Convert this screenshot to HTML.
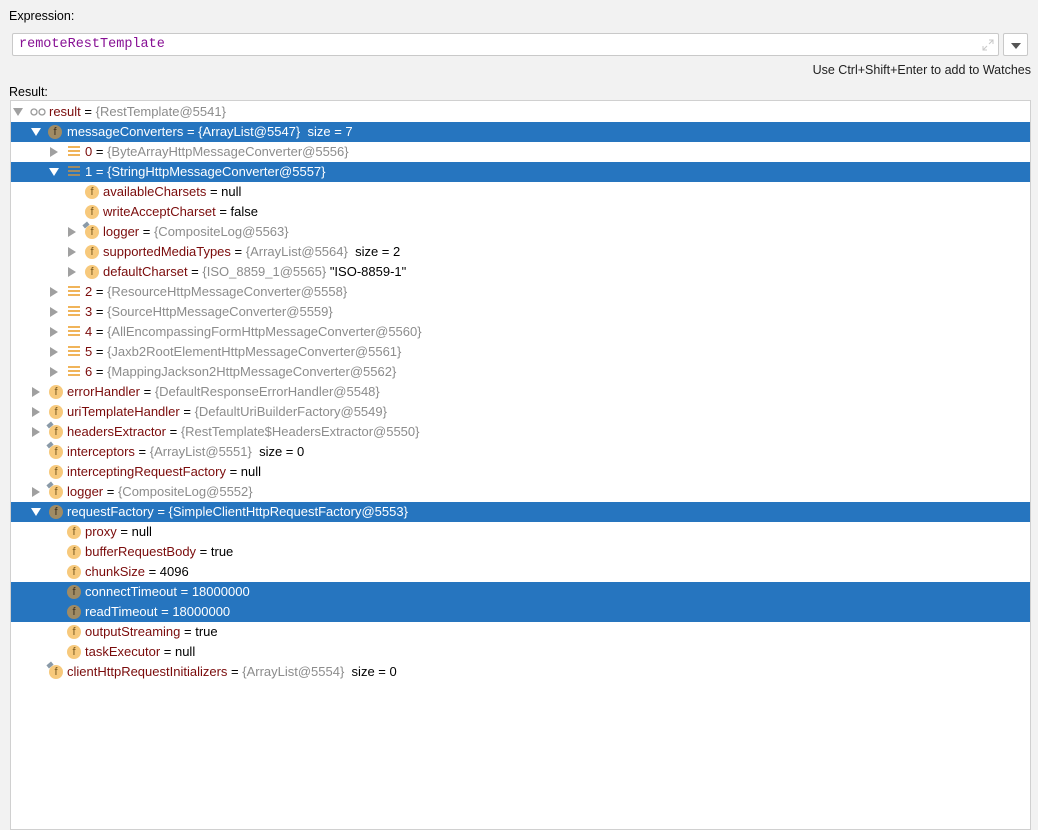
<!DOCTYPE html>
<html><head><style>
body{margin:0;width:1038px;height:816px;background:#f2f2f2;font-family:"Liberation Sans",sans-serif;font-size:13px;position:relative;overflow:hidden;color:#000}
.lbl{position:absolute;color:#000;font-size:12.5px}
.inp{position:absolute;left:12px;top:33px;width:987px;height:23px;background:#fff;border:1px solid #c9c9c9;border-radius:2px;box-sizing:border-box}
.inp span{position:absolute;left:6px;top:3px;font-family:"Liberation Mono",monospace;font-size:13.5px;color:#871094}
.dd{position:absolute;left:1003px;top:33px;width:25px;height:23px;background:#fff;border:1px solid #c9c9c9;border-radius:2px;box-sizing:border-box}
.tree{position:absolute;left:10px;top:100px;width:1021px;height:730px;background:#fff;border:1px solid #d0d0d0;box-sizing:border-box}
.row{position:absolute;left:11px;width:1019px;height:20px;line-height:20px;white-space:pre}
.sel{background:#2675bf;color:#fff}
.sel .n,.sel .g{color:#fff}
.n{color:#7a0b0b}
.g{color:#8c8c8c}
.t{position:absolute;top:0}
.ar{position:absolute;top:6px;width:0;height:0}
.ex{border-left:5px solid transparent;border-right:5px solid transparent;border-top:8px solid #a0a0a0;top:6px}
.co{border-top:5px solid transparent;border-bottom:5px solid transparent;border-left:8px solid #a0a0a0;top:5px}
.sel .ex{border-top-color:#fff}
.f{position:absolute;top:3px;width:14px;height:14px;border-radius:50%;background:#f7c97c;color:#7a5a20;font-size:11px;line-height:15px;text-align:center}
.sel .f{background:#a08b64;color:#3a3020}
.pin{position:absolute;top:1px;width:6px;height:4px;background:#8a9aa8;transform:rotate(-40deg)}
.li{position:absolute;top:4px;width:12px;height:12px;background:repeating-linear-gradient(#f0b45a 0 2px,transparent 2px 4px)}
.sel .li{background:repeating-linear-gradient(#a08b64 0 2px,transparent 2px 4px)}
</style></head><body>
<div class="lbl" style="left:9px;top:9px">Expression:</div>
<div class="inp"><span>remoteRestTemplate</span>
<svg style="position:absolute;left:968px;top:4px" width="14" height="14" viewBox="0 0 14 14"><path d="M8 2h4v4M12 2L8 6M6 12H2V8M2 12l4-4" stroke="#c8c8c8" fill="none"/></svg></div>
<div class="dd"><div style="position:absolute;left:7px;top:9px;border-left:5px solid transparent;border-right:5px solid transparent;border-top:6px solid #555"></div></div>
<div class="lbl" style="right:7px;top:63px;color:#222">Use Ctrl+Shift+Enter to add to Watches</div>
<div class="lbl" style="left:9px;top:85px">Result:</div>
<div class="tree"></div>

<div class="row" style="top:102px"><div class="ar ex" style="left:2px"></div><svg style="position:absolute;left:19px;top:6px" width="17" height="8"><circle cx="4" cy="4" r="3" stroke="#999" fill="none" stroke-width="1.3"/><circle cx="12" cy="4" r="3" stroke="#999" fill="none" stroke-width="1.3"/></svg><span class="t" style="left:38px"><span class="n">result</span> = <span class="g">{RestTemplate@5541}</span></span></div>

<div class="row sel" style="top:122px"><div class="ar ex" style="left:20px"></div><div class="f" style="left:37px">f</div><span class="t" style="left:56px"><span class="n">messageConverters</span> = <span class="g">{ArrayList@5547}</span>  size = 7</span></div>
<div class="row" style="top:142px"><div class="ar co" style="left:39px"></div><div class="li" style="left:57px"></div><span class="t" style="left:74px"><span class="n">0</span> = <span class="g">{ByteArrayHttpMessageConverter@5556}</span></span></div>
<div class="row sel" style="top:162px"><div class="ar ex" style="left:38px"></div><div class="li" style="left:57px"></div><span class="t" style="left:74px"><span class="n">1</span> = <span class="g">{StringHttpMessageConverter@5557}</span></span></div>
<div class="row" style="top:182px"><div class="f" style="left:74px">f</div><span class="t" style="left:92px"><span class="n">availableCharsets</span> = null</span></div>
<div class="row" style="top:202px"><div class="f" style="left:74px">f</div><span class="t" style="left:92px"><span class="n">writeAcceptCharset</span> = false</span></div>
<div class="row" style="top:222px"><div class="ar co" style="left:57px"></div><div class="f" style="left:74px">f</div><div class="pin" style="left:72px"></div><span class="t" style="left:92px"><span class="n">logger</span> = <span class="g">{CompositeLog@5563}</span></span></div>
<div class="row" style="top:242px"><div class="ar co" style="left:57px"></div><div class="f" style="left:74px">f</div><span class="t" style="left:92px"><span class="n">supportedMediaTypes</span> = <span class="g">{ArrayList@5564}</span>  size = 2</span></div>
<div class="row" style="top:262px"><div class="ar co" style="left:57px"></div><div class="f" style="left:74px">f</div><span class="t" style="left:92px"><span class="n">defaultCharset</span> = <span class="g">{ISO_8859_1@5565}</span> "ISO-8859-1"</span></div>
<div class="row" style="top:282px"><div class="ar co" style="left:39px"></div><div class="li" style="left:57px"></div><span class="t" style="left:74px"><span class="n">2</span> = <span class="g">{ResourceHttpMessageConverter@5558}</span></span></div>
<div class="row" style="top:302px"><div class="ar co" style="left:39px"></div><div class="li" style="left:57px"></div><span class="t" style="left:74px"><span class="n">3</span> = <span class="g">{SourceHttpMessageConverter@5559}</span></span></div>
<div class="row" style="top:322px"><div class="ar co" style="left:39px"></div><div class="li" style="left:57px"></div><span class="t" style="left:74px"><span class="n">4</span> = <span class="g">{AllEncompassingFormHttpMessageConverter@5560}</span></span></div>
<div class="row" style="top:342px"><div class="ar co" style="left:39px"></div><div class="li" style="left:57px"></div><span class="t" style="left:74px"><span class="n">5</span> = <span class="g">{Jaxb2RootElementHttpMessageConverter@5561}</span></span></div>
<div class="row" style="top:362px"><div class="ar co" style="left:39px"></div><div class="li" style="left:57px"></div><span class="t" style="left:74px"><span class="n">6</span> = <span class="g">{MappingJackson2HttpMessageConverter@5562}</span></span></div>
<div class="row" style="top:382px"><div class="ar co" style="left:21px"></div><div class="f" style="left:38px">f</div><span class="t" style="left:56px"><span class="n">errorHandler</span> = <span class="g">{DefaultResponseErrorHandler@5548}</span></span></div>
<div class="row" style="top:402px"><div class="ar co" style="left:21px"></div><div class="f" style="left:38px">f</div><span class="t" style="left:56px"><span class="n">uriTemplateHandler</span> = <span class="g">{DefaultUriBuilderFactory@5549}</span></span></div>
<div class="row" style="top:422px"><div class="ar co" style="left:21px"></div><div class="f" style="left:38px">f</div><div class="pin" style="left:36px"></div><span class="t" style="left:56px"><span class="n">headersExtractor</span> = <span class="g">{RestTemplate$HeadersExtractor@5550}</span></span></div>
<div class="row" style="top:442px"><div class="f" style="left:38px">f</div><div class="pin" style="left:36px"></div><span class="t" style="left:56px"><span class="n">interceptors</span> = <span class="g">{ArrayList@5551}</span>  size = 0</span></div>
<div class="row" style="top:462px"><div class="f" style="left:38px">f</div><span class="t" style="left:56px"><span class="n">interceptingRequestFactory</span> = null</span></div>
<div class="row" style="top:482px"><div class="ar co" style="left:21px"></div><div class="f" style="left:38px">f</div><div class="pin" style="left:36px"></div><span class="t" style="left:56px"><span class="n">logger</span> = <span class="g">{CompositeLog@5552}</span></span></div>
<div class="row sel" style="top:502px"><div class="ar ex" style="left:20px"></div><div class="f" style="left:38px">f</div><span class="t" style="left:56px"><span class="n">requestFactory</span> = <span class="g">{SimpleClientHttpRequestFactory@5553}</span></span></div>
<div class="row" style="top:522px"><div class="f" style="left:56px">f</div><span class="t" style="left:74px"><span class="n">proxy</span> = null</span></div>
<div class="row" style="top:542px"><div class="f" style="left:56px">f</div><span class="t" style="left:74px"><span class="n">bufferRequestBody</span> = true</span></div>
<div class="row" style="top:562px"><div class="f" style="left:56px">f</div><span class="t" style="left:74px"><span class="n">chunkSize</span> = 4096</span></div>
<div class="row sel" style="top:582px"><div class="f" style="left:56px">f</div><span class="t" style="left:74px"><span class="n">connectTimeout</span> = 18000000</span></div>
<div class="row sel" style="top:602px"><div class="f" style="left:56px">f</div><span class="t" style="left:74px"><span class="n">readTimeout</span> = 18000000</span></div>
<div class="row" style="top:622px"><div class="f" style="left:56px">f</div><span class="t" style="left:74px"><span class="n">outputStreaming</span> = true</span></div>
<div class="row" style="top:642px"><div class="f" style="left:56px">f</div><span class="t" style="left:74px"><span class="n">taskExecutor</span> = null</span></div>
<div class="row" style="top:662px"><div class="f" style="left:38px">f</div><div class="pin" style="left:36px"></div><span class="t" style="left:56px"><span class="n">clientHttpRequestInitializers</span> = <span class="g">{ArrayList@5554}</span>  size = 0</span></div>
</body></html>
